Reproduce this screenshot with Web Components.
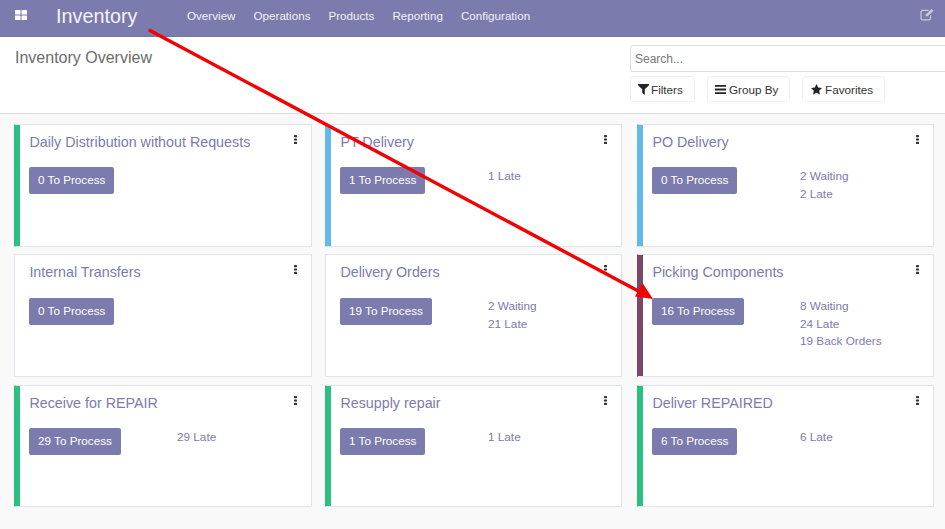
<!DOCTYPE html>
<html>
<head>
<meta charset="utf-8">
<title>Inventory</title>
<style>
    html, body {
        margin: 0;
        padding: 0;
        height: 529px;
        overflow: hidden;
        background: #f9f9f9;
        font-family: "Liberation Sans", Arial, sans-serif;
    }

    body {
        position: relative;
    }
</style>
</head>
<body>
<app-navbar brand="Inventory">
    <span>Overview</span>
    <span>Operations</span>
    <span>Products</span>
    <span>Reporting</span>
    <span>Configuration</span>
</app-navbar>

<control-panel heading="Inventory Overview"></control-panel>

<kanban-board>
    <picking-card title="Daily Distribution without Requests" count="0" accent="#2bc082"></picking-card>
    <picking-card title="PT Delivery" count="1" accent="#62b8e6">
        <div>1 Late</div>
    </picking-card>
    <picking-card title="PO Delivery" count="0" accent="#62b8e6">
        <div>2 Waiting</div>
        <div>2 Late</div>
    </picking-card>
    <picking-card title="Internal Transfers" count="0"></picking-card>
    <picking-card title="Delivery Orders" count="19">
        <div>2 Waiting</div>
        <div>21 Late</div>
    </picking-card>
    <picking-card title="Picking Components" count="16" accent="#7a4766">
        <div>8 Waiting</div>
        <div>24 Late</div>
        <div>19 Back Orders</div>
    </picking-card>
    <picking-card title="Receive for REPAIR" count="29" accent="#2bc082">
        <div>29 Late</div>
    </picking-card>
    <picking-card title="Resupply repair" count="1" accent="#2bc082">
        <div>1 Late</div>
    </picking-card>
    <picking-card title="Deliver REPAIRED" count="6" accent="#2bc082">
        <div>6 Late</div>
    </picking-card>
</kanban-board>

<red-arrow></red-arrow>

<script>
const navbarTemplate = document.createElement('template');
navbarTemplate.innerHTML = `<style>
        :host {
            display: flex;
            align-items: center;
            height: 37px;
            padding-bottom: 4px;
            background: #7c7bad;
            color: #fff;
            box-sizing: border-box;
            border-bottom: 1px solid #76759f;
        }

        .apps {
            display: block;
            margin: -2px 0 0 15px;
        }

        .brand {
            margin: 0 0 0 29px;
            width: 131px;
            font-size: 19.8px;
            color: #f4f4f8;
        }

        nav {
            display: flex;
            gap: 18px;
            margin-top: -2px;
            font-size: 11.65px;
            color: #f1f1f6;
        }

        .edit {
            margin: -3px 10px 0 auto;
        }
    </style>

    <svg class="apps" width="12" height="10" viewBox="0 0 12 10" fill="#fff">
        <rect x="0" y="0" width="5.5" height="4.5" rx=".6"/>
        <rect x="6.5" y="0" width="5.5" height="4.5" rx=".6"/>
        <rect x="0" y="5.5" width="5.5" height="4.5" rx=".6"/>
        <rect x="6.5" y="5.5" width="5.5" height="4.5" rx=".6"/>
    </svg>
    <div class="brand"></div>
    <nav><slot></slot></nav>
    <svg class="edit" width="15" height="13" viewBox="0 0 15 13" fill="none" stroke="#c9c9dd">
        <path d="M10.5 7.5v2.7a1.6 1.6 0 0 1-1.6 1.6H2.6A1.6 1.6 0 0 1 1 10.2V4a1.6 1.6 0 0 1 1.6-1.6h6" stroke-width="1.2"/>
        <path d="M5.5 8.5l.5-2.2L11.6.9l1.9 1.9L8 8z" fill="#c9c9dd" stroke="none"/>
    </svg>`;

class AppNavbar extends HTMLElement {
    constructor() {
        super();
        this.attachShadow({mode: 'open'});
        this.shadowRoot.appendChild(navbarTemplate.content.cloneNode(true));
        this.shadowRoot.querySelector('.brand').textContent = this.getAttribute('brand');
    }
}

const panelTemplate = document.createElement('template');
panelTemplate.innerHTML = `<style>
        :host {
            display: flex;
            justify-content: space-between;
            box-sizing: border-box;
            height: 77px;
            background: #fff;
            border-bottom: 1px solid #dedede;
            color: #6b6b6b;
        }

        h1 {
            margin: 11px 0 0 15px;
            font-size: 16px;
            line-height: 20px;
            font-weight: normal;
        }

        .tools {
            width: 315px;
            padding-top: 8px;
        }

        .search {
            box-sizing: border-box;
            width: 330px;
            height: 27px;
            line-height: 26px;
            padding-left: 4px;
            font-size: 12px;
            color: #777;
            border: 1px solid #dcdcdc;
            border-radius: 3px;
        }

        .buttons {
            display: flex;
            gap: 12px;
            margin-top: 4px;
        }

        .buttons div {
            display: flex;
            align-items: center;
            gap: 3px;
            box-sizing: border-box;
            height: 26px;
            padding-left: 7px;
            font-size: 11.7px;
            color: #333;
            border: 1px solid #f0f0f0;
            border-radius: 3px;
        }

        svg {
            display: block;
            fill: #212529;
        }
    </style>

    <h1></h1>
    <div class="tools">
        <div class="search">Search...</div>
        <div class="buttons">
            <div style="width: 65px; gap: 2px">
                <svg width="11" height="11" viewBox="0 0 11 11"><path d="M0 0h11v1.2L6.8 5.2V11L4.2 9V5.2L0 1.2z"/></svg>Filters
            </div>
            <div style="width: 83px">
                <svg width="11" height="9" viewBox="0 0 11 9"><path d="M0 0h11v1.8H0zM0 3.6h11v1.8H0zM0 7.2h11V9H0z"/></svg>Group By
            </div>
            <div style="width: 83px; padding-left: 8px">
                <svg width="11" height="11" viewBox="0 0 11 11"><path d="M5.5 0l1.7 3.6 3.8.5-2.8 2.6.7 3.9-3.4-1.9-3.4 1.9.7-3.9L0 4.1l3.8-.5z"/></svg>Favorites
            </div>
        </div>
    </div>`;

class ControlPanel extends HTMLElement {
    constructor() {
        super();
        this.attachShadow({mode: 'open'});
        this.shadowRoot.appendChild(panelTemplate.content.cloneNode(true));
        this.shadowRoot.querySelector('h1').textContent = this.getAttribute('heading');
    }
}

const boardTemplate = document.createElement('template');
boardTemplate.innerHTML = `<style>
        :host {
            display: grid;
            grid-template-columns: 298px 13px 297px 15px 297px;
            grid-auto-rows: 122.7px;
            row-gap: 7.6px;
            padding: 10px 0 0 14px;
        }

        ::slotted(:nth-child(3n+1)) {
            grid-column: 1;
        }

        ::slotted(:nth-child(3n+2)) {
            grid-column: 3;
        }

        ::slotted(:nth-child(3n)) {
            grid-column: 5;
        }
    </style>

    <slot></slot>`;

class KanbanBoard extends HTMLElement {
    constructor() {
        super();
        this.attachShadow({mode: 'open'});
        this.shadowRoot.appendChild(boardTemplate.content.cloneNode(true));
    }
}

const cardTemplate = document.createElement('template');
cardTemplate.innerHTML = `<style>
        :host {
            display: block;
            position: relative;
            box-sizing: border-box;
            background: #fff;
            border: 1px solid #e1e4e8;
            border-left-color: var(--accent, #e1e4e8);
            box-shadow: inset 5px 0 0 var(--accent, #fff);
            padding: 8px 8px 0 14px;
            color: #7c7bad;
        }

        h3 {
            margin: 0 0 0 .4px;
            font-size: 14.3px;
            line-height: 18px;
            font-weight: normal;
        }

        .body {
            display: flex;
            margin-top: 16.3px;
        }

        .process {
            flex: none;
            width: 148px;
        }

        .process span {
            display: inline-block;
            padding: 0 9px;
            height: 27px;
            line-height: 26px;
            font-size: 11.7px;
            color: #fff;
            background: #7c7bad;
            border-radius: 2px;
        }

        .stats {
            font-size: 11.75px;
            line-height: 17.4px;
            margin-top: -.2px;
        }

        svg {
            position: absolute;
            top: 10px;
            right: 14px;
            fill: #333;
        }
    </style>

    <h3></h3>
    <svg width="3" height="9" viewBox="0 0 3 9">
        <rect width="3" height="2.2" rx=".6"/>
        <rect y="3.4" width="3" height="2.2" rx=".6"/>
        <rect y="6.8" width="3" height="2.2" rx=".6"/>
    </svg>
    <div class="body">
        <div class="process"><span></span></div>
        <div class="stats"><slot></slot></div>
    </div>`;

class PickingCard extends HTMLElement {
    constructor() {
        super();
        this.attachShadow({mode: 'open'});
        this.shadowRoot.appendChild(cardTemplate.content.cloneNode(true));
        this.shadowRoot.querySelector('h3').textContent = this.getAttribute('title');
        this.shadowRoot.querySelector('.process span').textContent = this.getAttribute('count') + ' To Process';
        if (this.getAttribute('accent')) {
            this.style.setProperty('--accent', this.getAttribute('accent'));
        }
    }
}

const arrowTemplate = document.createElement('template');
arrowTemplate.innerHTML = `<style>
        :host {
            position: absolute;
            left: 0;
            top: 0;
            pointer-events: none;
        }

        svg {
            display: block;
        }
    </style>

    <svg width="945" height="529" viewBox="0 0 945 529">
        <path d="M150 30.5L642 293" stroke="#f50000" stroke-width="3.4" stroke-linecap="round" fill="none"/>
        <path d="M653 299L635 296.5L642.5 283z" fill="#f50000"/>
    </svg>`;

class RedArrow extends HTMLElement {
    constructor() {
        super();
        this.attachShadow({mode: 'open'});
        this.shadowRoot.appendChild(arrowTemplate.content.cloneNode(true));
    }
}

window.customElements.define('app-navbar', AppNavbar);
window.customElements.define('control-panel', ControlPanel);
window.customElements.define('kanban-board', KanbanBoard);
window.customElements.define('picking-card', PickingCard);
window.customElements.define('red-arrow', RedArrow);
</script>
</body>
</html>
